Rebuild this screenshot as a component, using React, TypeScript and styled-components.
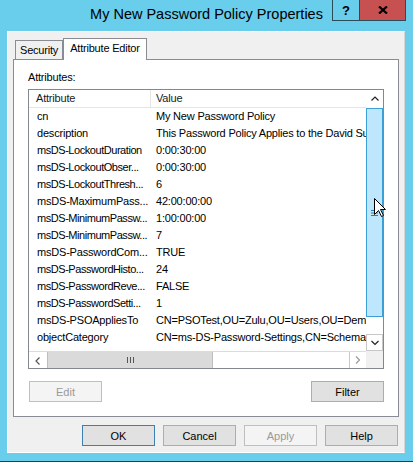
import React from 'react';
import styled, { createGlobalStyle } from 'styled-components';

const frameBlue = '#69cdec';
const uiFont = '"Liberation Sans", Arial, sans-serif';
const attrWidth = 121;
const scrollSize = 17;

const GlobalStyle = createGlobalStyle`
  body {
    margin: 0;
    background: ${frameBlue};
  }
  * {
    box-sizing: border-box;
  }
`;

const Window = styled.div`
  position: relative;
  width: 413px;
  height: 462px;
  display: flex;
  flex-direction: column;
  background: ${frameBlue};
  border-bottom: 1px solid #1f4352;
  font-family: ${uiFont};
  font-size: 11px;
  letter-spacing: -0.2px;
  color: #000;
  overflow: hidden;
`;

const TitleBar = styled.div`
  flex: none;
  height: 31px;
  display: grid;
  grid-template-columns: 1fr auto 1fr;
`;

const Title = styled.div`
  grid-column: 2;
  margin-top: 6px;
  font-size: 14.5px;
  line-height: 17px;
  letter-spacing: 0;
  white-space: nowrap;
  color: #000;
`;

const CaptionButtons = styled.div`
  grid-column: 3;
  justify-self: end;
  align-self: start;
  display: flex;
  margin-right: 7px;
`;

const CaptionButton = styled.div<{ $width: number; $bg: string; $first?: boolean }>`
  width: ${(p) => p.$width}px;
  height: 21px;
  display: flex;
  align-items: center;
  justify-content: center;
  background: ${(p) => p.$bg};
  border: 1px solid #2b4d5a;
  border-top: none;
  border-left: ${(p) => (p.$first ? '1px solid #2b4d5a' : 'none')};
  font-size: 13px;
  font-weight: bold;
  letter-spacing: 0;
`;

const Client = styled.div`
  flex: none;
  height: 422px;
  margin: 0 8px 0 7px;
  padding: 6px 5px;
  display: flex;
  flex-direction: column;
  background: #f0f0f0;
  border: 1px solid #fff;
  border-right-color: #d6d6d6;
`;

const TabStrip = styled.div`
  position: relative;
  z-index: 1;
  height: 22px;
  margin-bottom: -1px;
  padding-left: 2px;
  display: flex;
  align-items: flex-end;
`;

const Tab = styled.div<{ $active?: boolean }>`
  display: flex;
  align-items: center;
  height: ${(p) => (p.$active ? 22 : 19)}px;
  margin-bottom: ${(p) => (p.$active ? 0 : 1)}px;
  padding: 0 ${(p) => (p.$active ? 6 : 4)}px ${(p) => (p.$active ? 3 : 0)}px;
  border: 1px solid #898c95;
  border-bottom: none;
  background: ${(p) => (p.$active ? '#fff' : '#f0f0f0')};
  white-space: nowrap;
`;

const Panel = styled.div`
  flex: none;
  height: 358px;
  padding: 11px 14px 14px;
  display: flex;
  flex-direction: column;
  background: #fff;
  border: 1px solid #898c95;
`;

const Label = styled.div`
  line-height: 13px;
  margin-bottom: 5px;
`;

const ListView = styled.div`
  flex: none;
  height: 280px;
  display: grid;
  grid-template-columns: 1fr ${scrollSize}px;
  grid-template-rows: 1fr ${scrollSize}px;
  border: 1px solid #828790;
  background: #fff;
`;

const ListBody = styled.div`
  overflow: hidden;
  display: flex;
  flex-direction: column;
`;

const HeaderRow = styled.div`
  flex: none;
  display: flex;
  height: 18px;
  border-bottom: 1px solid #e5e5e5;
  color: #1a1a1a;
`;

const HeaderCell = styled.div<{ $width?: number; $pad: number }>`
  ${(p) => (p.$width ? `width: ${p.$width}px; flex: none; border-right: 1px solid #e5e5e5;` : 'flex: 1;')}
  padding-left: ${(p) => p.$pad}px;
  line-height: 17px;
`;

const Row = styled.div`
  flex: none;
  display: flex;
  height: 17px;
  line-height: 17px;
  white-space: nowrap;
`;

const Cell = styled.div<{ $width?: number; $pad: number; $tight?: boolean }>`
  ${(p) => (p.$width ? `width: ${p.$width}px; flex: none; overflow: hidden;` : 'flex: 1;')}
  padding-left: ${(p) => p.$pad}px;
  letter-spacing: ${(p) => (p.$tight ? -0.45 : -0.2)}px;
`;

const VScroll = styled.div`
  grid-column: 2;
  grid-row: 1;
  display: flex;
  flex-direction: column;
  background: #fff;
`;

const HScroll = styled.div`
  grid-column: 1;
  grid-row: 2;
  display: flex;
  background: #fff;
  border-top: 1px solid #dcdcdc;
`;

const Corner = styled.div`
  grid-column: 2;
  grid-row: 2;
  background: #f0f0f0;
`;

const ArrowButton = styled.div<{ $boxed?: 'left' | 'all'; $w?: number }>`
  flex: none;
  width: ${(p) => p.$w ?? scrollSize}px;
  height: ${scrollSize}px;
  display: flex;
  align-items: center;
  justify-content: center;
  ${(p) => p.$boxed === 'all' && 'border: 1px solid #c8c8c8;'}
  ${(p) => p.$boxed === 'left' && 'border-left: 1px solid #c8c8c8; height: 16px;'}
`;

const VThumb = styled.div`
  flex: none;
  height: 209px;
  margin-top: 1px;
  display: flex;
  align-items: center;
  justify-content: center;
  background: #bee6fd;
  border: 1px solid #3c9fd6;
`;

const HThumb = styled.div`
  flex: none;
  width: 166px;
  height: 16px;
  display: flex;
  align-items: center;
  justify-content: center;
  background: #dadada;
  border-left: 1px solid #bdbdbd;
  border-right: 1px solid #bdbdbd;
`;

const Track = styled.div`
  flex: 1;
`;

const PanelButtons = styled.div`
  display: flex;
  justify-content: space-between;
  margin-top: 12px;
  padding-left: 1px;
`;

const DialogButtons = styled.div`
  display: flex;
  justify-content: flex-end;
  gap: 8px;
  margin-top: 8px;
  margin-right: 1px;
`;

type Variant = 'normal' | 'default' | 'disabled';

const buttonColors: Record<Variant, { bg: string; border: string; color: string }> = {
  normal: { bg: '#e1e1e1', border: '#adadad', color: '#000' },
  default: { bg: '#e1e1e1', border: '#3c7fb1', color: '#000' },
  disabled: { bg: '#f4f4f4', border: '#bfbfbf', color: '#9a9a9a' },
};

const Button = styled.div<{ $variant?: Variant }>`
  width: 73px;
  height: 21px;
  display: flex;
  align-items: center;
  justify-content: center;
  letter-spacing: 0;
  background: ${(p) => buttonColors[p.$variant ?? 'normal'].bg};
  border: 1px solid ${(p) => buttonColors[p.$variant ?? 'normal'].border};
  color: ${(p) => buttonColors[p.$variant ?? 'normal'].color};
`;

const Cursor = styled.svg`
  position: absolute;
  left: 374px;
  top: 198px;
  pointer-events: none;
`;

const Chevron = ({ dir, color = '#222' }: { dir: 'up' | 'down' | 'left' | 'right'; color?: string }) => {
  const paths = {
    up: 'M0.5 4.5 L4 1 L7.5 4.5',
    down: 'M0.5 1 L4 4.5 L7.5 1',
    left: 'M4.5 0.5 L1 4 L4.5 7.5',
    right: 'M1 0.5 L4.5 4 L1 7.5',
  };
  const vertical = dir === 'up' || dir === 'down';
  return (
    <svg width={vertical ? 8 : 6} height={vertical ? 6 : 8}>
      <path d={paths[dir]} fill="none" stroke={color} strokeWidth="1.2" />
    </svg>
  );
};

const rows: [string, string][] = [
  ['cn', 'My New Password Policy'],
  ['description', 'This Password Policy Applies to the David Sullivan Account'],
  ['msDS-LockoutDuration', '0:00:30:00'],
  ['msDS-LockoutObser...', '0:00:30:00'],
  ['msDS-LockoutThresh...', '6'],
  ['msDS-MaximumPass...', '42:00:00:00'],
  ['msDS-MinimumPassw...', '1:00:00:00'],
  ['msDS-MinimumPassw...', '7'],
  ['msDS-PasswordCom...', 'TRUE'],
  ['msDS-PasswordHisto...', '24'],
  ['msDS-PasswordReve...', 'FALSE'],
  ['msDS-PasswordSetti...', '1'],
  ['msDS-PSOAppliesTo', 'CN=PSOTest,OU=Zulu,OU=Users,OU=Demo,DC=contoso,DC=com'],
  ['objectCategory', 'CN=ms-DS-Password-Settings,CN=Schema,CN=Configuration,DC=contoso,DC=com'],
];

const App: React.FC = () => (
  <Window>
    <GlobalStyle />
    <TitleBar>
      <Title>My New Password Policy Properties</Title>
      <CaptionButtons>
        <CaptionButton $width={28} $bg={frameBlue} $first>
          ?
        </CaptionButton>
        <CaptionButton $width={46} $bg="#c75050">
          <svg width="10" height="8">
            <path d="M1 0.5 L9 7.5 M9 0.5 L1 7.5" stroke="#000" strokeWidth="2.2" />
          </svg>
        </CaptionButton>
      </CaptionButtons>
    </TitleBar>

    <Client>
      <TabStrip>
        <Tab>Security</Tab>
        <Tab $active>Attribute Editor</Tab>
      </TabStrip>
      <Panel>
        <Label>Attributes:</Label>
        <ListView>
          <ListBody>
            <HeaderRow>
              <HeaderCell $width={attrWidth + 1} $pad={7}>
                Attribute
              </HeaderCell>
              <HeaderCell $pad={5}>Value</HeaderCell>
            </HeaderRow>
            {rows.map(([attr, value], i) => (
              <Row key={i}>
                <Cell $width={attrWidth} $pad={8} $tight={attr.length > 19}>
                  {attr}
                </Cell>
                <Cell $pad={6}>{value}</Cell>
              </Row>
            ))}
          </ListBody>
          <VScroll>
            <ArrowButton>
              <Chevron dir="up" />
            </ArrowButton>
            <VThumb>
              <svg width="7" height="6">
                <rect x="0" y="0" width="7" height="1" fill="#2a7ab8" />
                <rect x="0" y="2.5" width="7" height="1" fill="#2a7ab8" />
                <rect x="0" y="5" width="7" height="1" fill="#2a7ab8" />
              </svg>
            </VThumb>
            <Track />
            <ArrowButton $boxed="all">
              <Chevron dir="down" />
            </ArrowButton>
          </VScroll>
          <HScroll>
            <ArrowButton $w={18}>
              <Chevron dir="left" color="#555" />
            </ArrowButton>
            <HThumb>
              <svg width="7" height="6">
                <rect x="0" y="0" width="1" height="6" fill="#555" />
                <rect x="3" y="0" width="1" height="6" fill="#555" />
                <rect x="6" y="0" width="1" height="6" fill="#555" />
              </svg>
            </HThumb>
            <Track />
            <ArrowButton $boxed="left">
              <Chevron dir="right" color="#999" />
            </ArrowButton>
          </HScroll>
          <Corner />
        </ListView>
        <PanelButtons>
          <Button $variant="disabled">Edit</Button>
          <Button>Filter</Button>
        </PanelButtons>
      </Panel>
      <DialogButtons>
        <Button $variant="default">OK</Button>
        <Button>Cancel</Button>
        <Button $variant="disabled">Apply</Button>
        <Button>Help</Button>
      </DialogButtons>
    </Client>

    <Cursor width="13" height="20">
      <path
        d="M0.5 0.5 L0.5 16.5 L4.5 12.5 L7.5 18.5 L9.5 17.5 L6.5 11.5 L11.5 11.5 Z"
        fill="#fff"
        stroke="#000"
        strokeWidth="1"
      />
    </Cursor>
  </Window>
);

export default App;
